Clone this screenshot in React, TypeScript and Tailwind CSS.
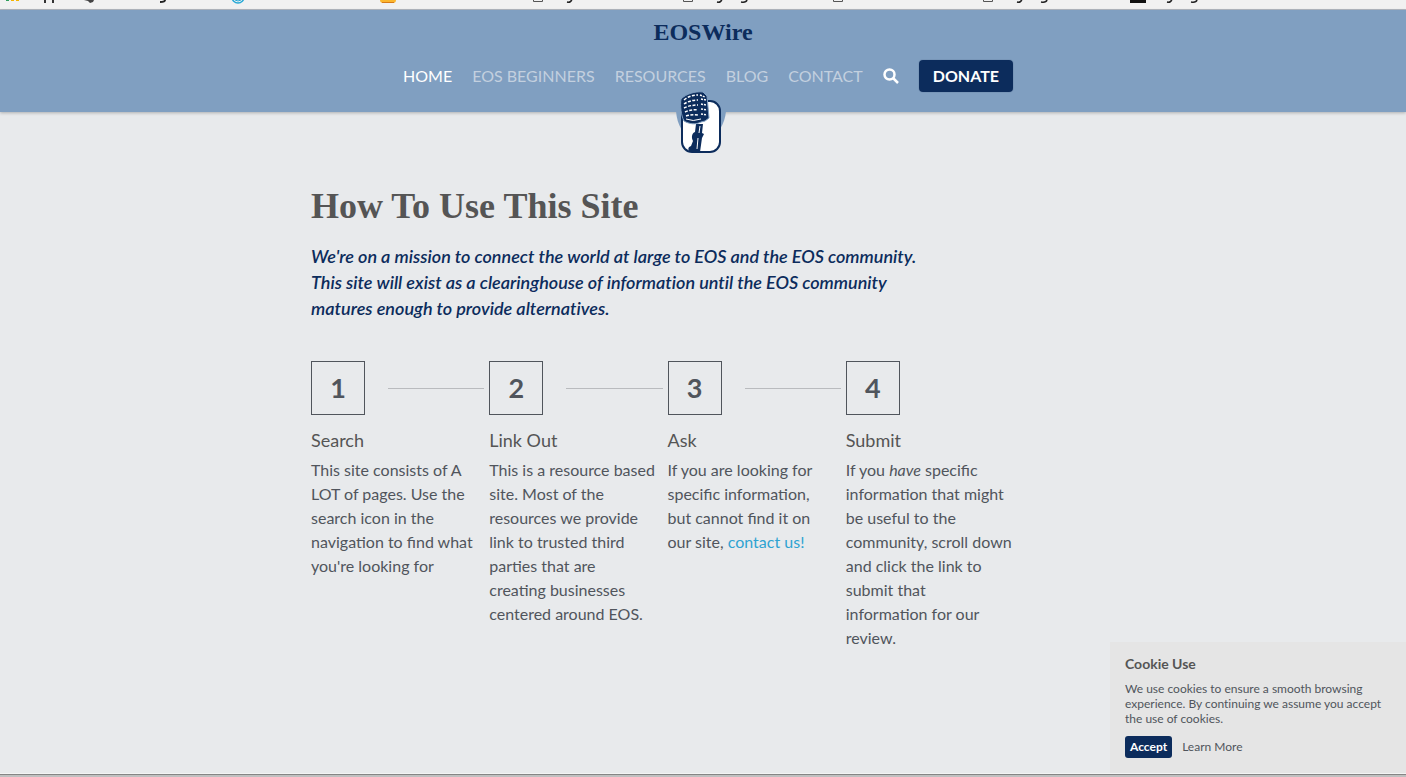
import React from "react";

const navItems = ["EOS BEGINNERS", "RESOURCES", "BLOG", "CONTACT"];

const steps: { title: string; body: React.ReactNode }[] = [
  {
    title: "Search",
    body: "This site consists of A LOT of pages. Use the search icon in the navigation to find what you're looking for",
  },
  {
    title: "Link Out",
    body: "This is a resource based site. Most of the resources we provide link to trusted third parties that are creating\u00a0businesses centered around EOS.",
  },
  {
    title: "Ask",
    body: (
      <>
        If you are looking for specific information, but&nbsp;cannot find it on our&nbsp;site,{" "}
        <a href="#contact" className="text-[#2ea3d2]">contact us!</a>
      </>
    ),
  },
  {
    title: "Submit",
    body: (
      <>
        If you <em>have</em> specific information that might be useful to the community, scroll down
        and click the link to submit that information&nbsp;for&nbsp;our review.
      </>
    ),
  },
];

function BookmarkStrip() {
  return (
    <svg className="block h-[10px] w-full shrink-0 bg-[#f1f1f1]" aria-hidden="true">
      <path d="M6 0h3v1h-3z" fill="#2e9e5b" />
      <path d="M11 0h3v1h-3zM16 0h3v1h-3z" fill="#f5b400" />
      <path d="M45 0v3M53 0v3" stroke="#333" strokeWidth="2" />
      <path d="M84 0h10l-1 2-3 1-2-2z" fill="#444" />
      <path d="M165 0q0 2-5 2" stroke="#222" strokeWidth="2" fill="none" />
      <circle cx="238" cy="-3" r="6" stroke="#27a9d6" strokeWidth="1.5" fill="none" />
      <path d="M235 0q3 2 6 0" stroke="#27a9d6" fill="none" />
      <path d="M380 0h16q0 3-3 3h-10q-3 0-3-3z" fill="#fbb62e" />
      <path d="M382 2.500h12" stroke="#d97b16" />
      <path d="M533.500-4v5.500h9v-5.500M683.500-4v5.500h9v-5.500M833.500-4v5.500h9v-5.500M983.500-4v5.500h9v-5.500" stroke="#555" fill="none" />
      <path d="M572-1q-1 4-5 3M722-1q-1 4-5 3M747 0q-1 3-6 2M1022-1q-1 4-5 3M1047 0q-1 3-6 2M1172-1q-1 4-5 3M1197 0q-1 3-6 2" stroke="#222" strokeWidth="1.500" fill="none" />
      <path d="M1130 0h16v3h-16z" fill="#111" />
      <path d="M0 9.500h4000" stroke="#b4b9c2" />
    </svg>
  );
}

function Microphone() {
  return (
    <svg width="56" height="66" viewBox="0 0 56 66" role="img" aria-label="EOSWire microphone">
      <path d="M3 20h50c-1 13-8 24-18 29H21C10 44 4 34 3 20z" fill="#809fc1" />
      <rect x="9" y="10" width="38" height="51" rx="10" fill="#fff" stroke="#0c2c5c" strokeWidth="2" />
      <path d="M16 60c-1-2-1-4 2-5l2-5c-2-4-1-8 2-9l1-8h7l-1 9 2 1-2 4-2 14z" fill="#0c2c5c" />
      <path d="M25 47l-1 11M27 35l-1 7" stroke="#fff" />
      <path d="M8 8c5-5 14-8 22-7l4 4 2 22-4 3-4 1c-5 3-12 2-17-1-3-6-4-15-3-22z" fill="#0c2c5c" stroke="#809fc1" strokeWidth="1" />
      <path d="M11 9q6-5 14-5M11 13q6-4 14-4M11 17q6-3 14-3M12 21q6-3 13-2M13 25q6-2 12-1" stroke="#fff" strokeWidth="1.500" strokeDasharray="3 1.5" fill="none" />
      <path d="M27 4l5 2M28 8l5 1M28 13l5 1M28 18l6 1M28 23l6 1" stroke="#fff" strokeWidth="1.500" strokeDasharray="2 1" fill="none" />
      <path d="M13 28q7 3 15 0" stroke="#fff" fill="none" />
    </svg>
  );
}

export default function App() {
  return (
    <div className="flex min-h-screen flex-col bg-[#e8eaec] font-['Lato',sans-serif] text-[#50555c]">
      <BookmarkStrip />
      <header className="relative flex h-[102px] flex-col items-center bg-[#809fc1] shadow-[0_1px_3px_rgba(0,0,0,0.25)]">
        <a href="#home" className="mt-1 font-['Liberation_Serif',serif] text-[24px] leading-9 font-bold text-[#0c2c5c]">
          EOSWire
        </a>
        <nav className="mt-2.5 flex items-center gap-5 pl-2.5 text-base leading-8 text-[#c3d0df]">
          <a href="#home" className="text-white">HOME</a>
          {navItems.map((item) => (
            <a key={item} href="#section">{item}</a>
          ))}
          <button aria-label="Search" className="text-white">
            <svg width="16" height="16" viewBox="0 0 16 16" fill="none" stroke="currentColor" strokeWidth="2.500">
              <circle cx="6.500" cy="6.500" r="5" />
              <path d="M10 10l5 5" />
            </svg>
          </button>
          <a href="#donate" className="rounded bg-[#0c2c5c] px-3.5 font-bold text-white shadow-[0_0_0_1px_#7896b8]">DONATE</a>
        </nav>
        <div className="absolute top-[81px] left-1/2 -translate-x-[30px]">
          <Microphone />
        </div>
      </header>

      <main className="mx-auto w-full max-w-[784px] grow pt-[70px]">
        <h1 className="font-['Liberation_Serif',serif] text-[36px] leading-12 font-bold text-[#555]">How To Use This Site</h1>
        <p className="mt-[13px] max-w-[610px] text-lg leading-[26px] font-semibold text-[#0c2c5c] italic [font-variant-ligatures:none]">
          We're on a mission to connect the world at large to EOS and the EOS community. This site
          will exist as a clearinghouse of information until the EOS community matures enough to
          provide alternatives.
        </p>
        <ol className="mt-10 grid max-w-[713px] grid-cols-4">
          {steps.map((step, index) => (
            <li key={step.title}>
              <div className="flex items-center">
                <span className="flex size-[54px] shrink-0 items-center justify-center border border-[#50555c] text-[27px] font-bold">
                  {index + 1}
                </span>
                {index < steps.length - 1 && <span className="mr-[5px] ml-[23px] h-px grow bg-[#b9bbbe]" />}
              </div>
              <h2 className="mt-[11px] text-lg leading-7 text-[#555]">{step.title}</h2>
              <p className="mt-1 mr-2.5 text-base leading-6">{step.body}</p>
            </li>
          ))}
        </ol>
      </main>

      <aside aria-label="Cookie Use" className="fixed right-0 bottom-1 h-[131px] w-[296px] bg-[#e5e5e5] px-[15px] pt-3">
        <h2 className="text-sm leading-5 font-bold text-[#555]">Cookie Use</h2>
        <p className="mt-[7px] text-xs leading-[15px] [font-variant-ligatures:none]">
          We use cookies to ensure a smooth browsing experience. By continuing we assume you accept
          the use of cookies.
        </p>
        <div className="mt-2.5 flex items-center gap-2.5 text-xs">
          <button className="h-[22px] rounded-[3px] bg-[#0c2c5c] px-[5px] font-bold text-white">Accept</button>
          <a href="#learn-more">Learn More</a>
        </div>
      </aside>
      <div className="h-[3px] border-t border-[#858585] bg-[#c0c0c0] shadow-[0_-1px_0_#f4f4f4]" />
    </div>
  );
}
